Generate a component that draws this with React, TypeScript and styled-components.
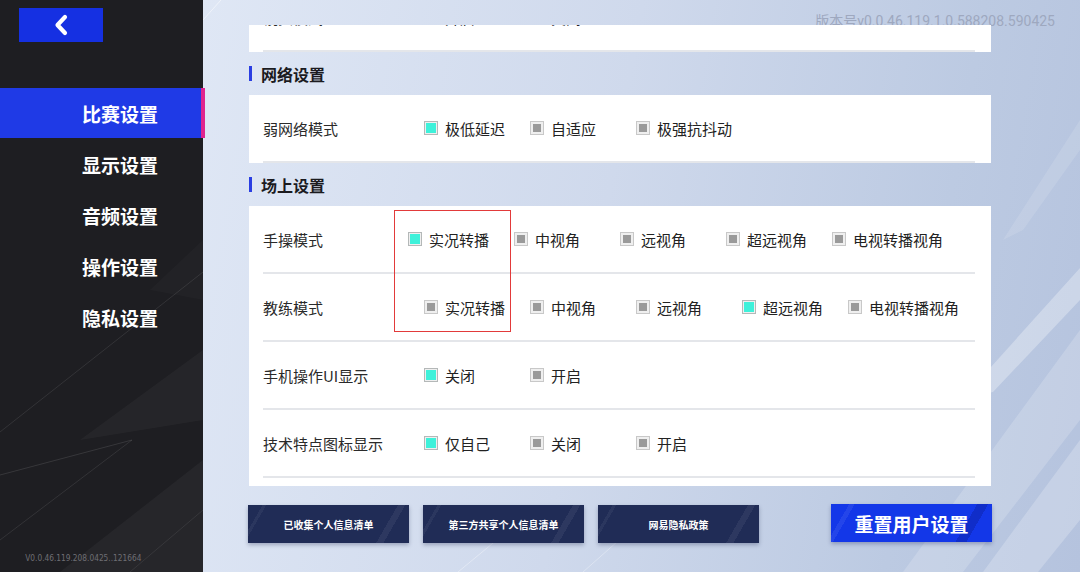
import React from "react";
import styled, { createGlobalStyle } from "styled-components";

const Global = createGlobalStyle`
  html, body { margin: 0; padding: 0; }
  body { font-family: "Noto Sans CJK SC", "Noto Sans", sans-serif; }
  * { box-sizing: border-box; }
`;

const CJK = `"Noto Sans CJK SC", "Noto Sans", sans-serif`;

const Screen = styled.div`
  width: 1080px;
  height: 572px;
  display: flex;
  overflow: hidden;
  font-family: ${CJK};
`;

const Sidebar = styled.aside`
  position: relative;
  width: 203px;
  flex: none;
  background: #1e1e22;
  display: flex;
  flex-direction: column;
  z-index: 2;
`;

const Decor = styled.svg`
  position: absolute;
  inset: 0;
  width: 100%;
  height: 100%;
  pointer-events: none;
  z-index: 0;
`;

const BackButton = styled.button`
  position: relative;
  z-index: 1;
  margin: 8px 0 0 19px;
  width: 84px;
  height: 34px;
  border: none;
  padding: 0;
  background: #1530e2;
  display: flex;
  align-items: center;
  justify-content: center;
  cursor: pointer;
`;

const Nav = styled.nav`
  position: relative;
  z-index: 1;
  margin-top: 46px;
  display: flex;
  flex-direction: column;
`;

const NavItem = styled.div<{ $active?: boolean }>`
  height: ${(p) => (p.$active ? 50 : 51)}px;
  margin-bottom: ${(p) => (p.$active ? 1 : 0)}px;
  width: ${(p) => (p.$active ? "205px" : "203px")};
  padding-left: 82px;
  display: flex;
  align-items: center;
  font-size: 19px;
  font-weight: 700;
  color: #ffffff;
  background: ${(p) => (p.$active ? "#1f3ae6" : "transparent")};
  border-right: ${(p) => (p.$active ? "4px solid #e0248e" : "none")};
`;

const SmallVersion = styled.div`
  position: relative;
  z-index: 1;
  margin-top: auto;
  padding: 0 0 9px 29px;
  font-family: "DejaVu Sans", sans-serif;
  font-stretch: condensed;
  font-size: 9.5px;
  color: #6e6e74;
  white-space: nowrap;
  transform: scaleX(0.87);
  transform-origin: left center;
`;

const Main = styled.main`
  position: relative;
  flex: 1;
  display: flex;
  flex-direction: column;
  padding: 25px 0 0 46px;
  background: linear-gradient(100deg, #dfe7f5 0%, #cfd9ec 45%, #bccae2 80%, #b5c3de 100%);
`;

const TopVersion = styled.div`
  position: absolute;
  top: 13px;
  right: 25px;
  font-family: Roboto, "Noto Sans CJK SC", sans-serif;
  font-size: 14px;
  line-height: 16px;
  color: #9ea8bf;
  z-index: 0;
`;

const ScrollArea = styled.div`
  position: relative;
  z-index: 1;
  width: 742px;
  height: 461px;
  overflow: hidden;
`;

const Content = styled.div`
  margin-top: -40px;
  display: flex;
  flex-direction: column;
`;

const Panel = styled.section`
  position: relative;
  background: #ffffff;
  display: flex;
  flex-direction: column;
`;

const SectionHeader = styled.h2`
  margin: 0;
  height: 43px;
  display: flex;
  align-items: center;
  gap: 9px;
  font-size: 16px;
  font-weight: 700;
  color: #1b1b1f;
  &::before {
    content: "";
    width: 3px;
    height: 15px;
    background: #2a3ee2;
  }
`;

const Row = styled.div`
  height: 68px;
  margin: 0 16px 0 14px;
  border-bottom: 2px solid #e4e6ea;
  display: flex;
  align-items: center;
`;

const TopRow = styled(Row)`
  height: 67px;
`;

const RowLabel = styled.div`
  width: 161px;
  flex: none;
  font-size: 15px;
  color: #2a2a2a;
`;

const Options = styled.div<{ $shift?: number }>`
  display: flex;
  align-items: center;
  margin-left: ${(p) => p.$shift ?? 0}px;
`;

const Option = styled.label`
  width: 106px;
  flex: none;
  display: flex;
  align-items: center;
  gap: 7px;
  font-size: 15px;
  color: #222222;
  white-space: nowrap;
`;

const Box = styled.span<{ $on?: boolean }>`
  width: 14px;
  height: 14px;
  flex: none;
  border: 1px solid ${(p) => (p.$on ? "#b4b8b8" : "#c8c8c8")};
  background: #efefef;
  padding: ${(p) => (p.$on ? "1px" : "2px")};
  display: flex;
  &::after {
    content: "";
    flex: 1;
    background: ${(p) => (p.$on ? "#3ef1da" : "#9a9a9a")};
  }
`;

const Annotation = styled.div`
  position: absolute;
  top: 4px;
  left: 145px;
  width: 117px;
  height: 122px;
  border: 1.5px solid #e23a3a;
  pointer-events: none;
`;

const ButtonBar = styled.div`
  position: relative;
  z-index: 1;
  width: 744px;
  margin: 18px 0 0 -1px;
  display: flex;
  align-items: flex-start;
  gap: 14px;
`;

const InfoButton = styled.button`
  width: 161px;
  height: 38px;
  margin-top: 1px;
  border: none;
  padding: 0;
  font-family: ${CJK};
  font-size: 10px;
  font-weight: 700;
  color: #ffffff;
  background:
    linear-gradient(120deg, transparent 0 82%, rgba(255,255,255,0.06) 82% 86%, transparent 86%),
    linear-gradient(120deg, transparent 0 8%, rgba(255,255,255,0.05) 8% 10%, transparent 10%),
    #202c56;
  box-shadow: 0 2px 4px rgba(20, 30, 70, 0.3);
  cursor: pointer;
`;

const ResetButton = styled.button`
  width: 161px;
  height: 38px;
  margin-left: auto;
  border: none;
  padding: 0;
  font-family: ${CJK};
  font-size: 19px;
  font-weight: 700;
  color: #ffffff;
  background:
    linear-gradient(120deg, transparent 0 80%, rgba(0,0,60,0.18) 80% 86%, transparent 86%),
    linear-gradient(120deg, transparent 0 10%, rgba(255,255,255,0.07) 10% 13%, transparent 13%),
    #1337e8;
  box-shadow: 0 2px 4px rgba(20, 30, 90, 0.3);
  cursor: pointer;
`;

type Opt = { label: string; on?: boolean };
type RowData = { label: string; options: Opt[]; shift?: number };

const topRow: RowData = { label: "镜头模式", options: [{ label: "开启" }, { label: "关闭" }] };

const netRows: RowData[] = [
  {
    label: "弱网络模式",
    options: [{ label: "极低延迟", on: true }, { label: "自适应" }, { label: "极强抗抖动" }],
  },
];

const fieldRows: RowData[] = [
  {
    label: "手操模式",
    shift: -16,
    options: [
      { label: "实况转播", on: true },
      { label: "中视角" },
      { label: "远视角" },
      { label: "超远视角" },
      { label: "电视转播视角" },
    ],
  },
  {
    label: "教练模式",
    options: [
      { label: "实况转播" },
      { label: "中视角" },
      { label: "远视角" },
      { label: "超远视角", on: true },
      { label: "电视转播视角" },
    ],
  },
  {
    label: "手机操作UI显示",
    options: [{ label: "关闭", on: true }, { label: "开启" }],
  },
  {
    label: "技术特点图标显示",
    options: [{ label: "仅自己", on: true }, { label: "关闭" }, { label: "开启" }],
  },
  { label: "", options: [] },
];

function OptionList({ row }: { row: RowData }) {
  return (
    <>
      <RowLabel>{row.label}</RowLabel>
      <Options $shift={row.shift}>
        {row.options.map((o) => (
          <Option key={o.label}>
            <Box $on={o.on} />
            {o.label}
          </Option>
        ))}
      </Options>
    </>
  );
}

function SettingRow({ row }: { row: RowData }) {
  return (
    <Row>
      <OptionList row={row} />
    </Row>
  );
}

const navItems = ["比赛设置", "显示设置", "音频设置", "操作设置", "隐私设置"];

export default function App() {
  return (
    <>
      <Global />
      <Screen>
        <Sidebar>
          <Decor viewBox="0 0 203 572" preserveAspectRatio="none">
            <polygon points="203,350 80,440 203,420" fill="#ffffff" opacity="0.035" />
            <polygon points="203,460 60,572 203,572" fill="#ffffff" opacity="0.04" />
            <polygon points="203,240 150,290 203,300" fill="#ffffff" opacity="0.02" />
            <line x1="0" y1="432" x2="203" y2="272" stroke="#ffffff" strokeOpacity="0.12" strokeWidth="0.8" />
            <line x1="0" y1="475" x2="132" y2="440" stroke="#ffffff" strokeOpacity="0.14" strokeWidth="0.8" />
            <line x1="132" y1="440" x2="0" y2="540" stroke="#ffffff" strokeOpacity="0.12" strokeWidth="0.8" />
            <line x1="130" y1="572" x2="203" y2="510" stroke="#ffffff" strokeOpacity="0.1" strokeWidth="0.8" />
          </Decor>
          <BackButton aria-label="返回">
            <svg width="16" height="22" viewBox="0 0 16 22">
              <polyline
                points="12,3 4.5,11 12,19"
                fill="none"
                stroke="#ffffff"
                strokeWidth="4.2"
                strokeLinejoin="round"
                strokeLinecap="round"
              />
            </svg>
          </BackButton>
          <Nav>
            {navItems.map((n, i) => (
              <NavItem key={n} $active={i === 0}>
                {n}
              </NavItem>
            ))}
          </Nav>
          <SmallVersion>V0.0.46.119.208.0425..121664</SmallVersion>
        </Sidebar>
        <Main>
          <Decor viewBox="0 0 877 572" preserveAspectRatio="none">
            <polygon points="877,268 877,300 790,392 760,398" fill="#ffffff" opacity="0.3" />
            <polygon points="877,330 877,420 760,572 700,572" fill="#ffffff" opacity="0.18" />
            <polygon points="877,440 877,520 835,572 780,572" fill="#ffffff" opacity="0.22" />
            <polygon points="877,120 877,150 820,230 800,240" fill="#ffffff" opacity="0.12" />
            <line x1="255" y1="572" x2="330" y2="510" stroke="#ffffff" strokeOpacity="0.45" strokeWidth="0.8" />
            <line x1="380" y1="572" x2="450" y2="510" stroke="#ffffff" strokeOpacity="0.4" strokeWidth="0.8" />
            <line x1="0" y1="20" x2="18" y2="0" stroke="#ffffff" strokeOpacity="0.5" strokeWidth="1" />
          </Decor>
          <TopVersion>版本号v0.0.46.119.1.0.588208.590425</TopVersion>
          <ScrollArea>
            <Content>
              <Panel>
                <TopRow>
                  <OptionList row={topRow} />
                </TopRow>
              </Panel>
              <SectionHeader>网络设置</SectionHeader>
              <Panel>
                {netRows.map((r) => (
                  <SettingRow key={r.label} row={r} />
                ))}
              </Panel>
              <SectionHeader>场上设置</SectionHeader>
              <Panel>
                {fieldRows.map((r, i) => (
                  <SettingRow key={i} row={r} />
                ))}
                <Annotation />
              </Panel>
            </Content>
          </ScrollArea>
          <ButtonBar>
            <InfoButton>已收集个人信息清单</InfoButton>
            <InfoButton>第三方共享个人信息清单</InfoButton>
            <InfoButton>网易隐私政策</InfoButton>
            <ResetButton>重置用户设置</ResetButton>
          </ButtonBar>
        </Main>
      </Screen>
    </>
  );
}
